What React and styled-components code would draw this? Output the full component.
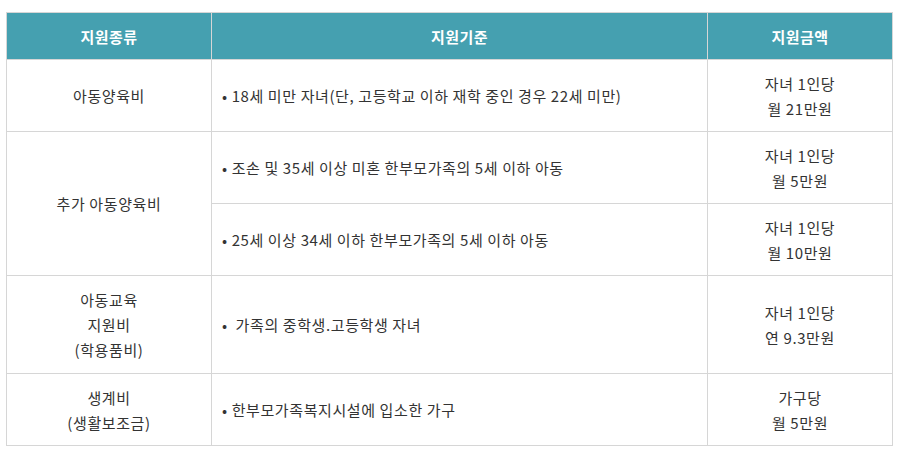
import React from 'react';
import styled, { createGlobalStyle } from 'styled-components';

const GlobalStyle = createGlobalStyle`
  body {
    margin: 0;
    background: #fff;
    font-family: "Noto Sans CJK KR", "Noto Sans", sans-serif;
  }
`;

const Wrap = styled.div`
  padding: 12px 12px 0 6px;
`;

const Table = styled.table`
  width: 886px;
  border-collapse: collapse;
  table-layout: fixed;
  font-size: 15px;
  letter-spacing: 0.6px;
  color: #333;
`;

const HeadCell = styled.th`
  height: 46px;
  padding: 0;
  background: #45a0b0;
  color: #fff;
  font-weight: 700;
  font-size: 15px;
  letter-spacing: 0.4px;
  text-align: center;
  border: 1px solid #d6d6d6;
`;

const Cell = styled.td`
  padding: 10px 10px;
  height: ${props => props.$h || 72}px;
  box-sizing: border-box;
  line-height: 25px;
  text-align: ${props => (props.$left ? 'left' : 'center')};
  border: 1px solid #d6d6d6;
  vertical-align: middle;
`;

const rows = [
  { kind: ['아동양육비'], rule: '• 18세 미만 자녀(단, 고등학교 이하 재학 중인 경우 22세 미만)', pay: ['자녀 1인당', '월 21만원'] },
  { kind: ['추가 아동양육비'], span: 2, rule: '• 조손 및 35세 이상 미혼 한부모가족의 5세 이하 아동', pay: ['자녀 1인당', '월 5만원'] },
  { rule: '• 25세 이상 34세 이하 한부모가족의 5세 이하 아동', pay: ['자녀 1인당', '월 10만원'] },
  { kind: ['아동교육', '지원비', '(학용품비)'], h: 98, rule: '•\u00a0 가족의 중학생.고등학생 자녀', pay: ['자녀 1인당', '연 9.3만원'] },
  { kind: ['생계비', '(생활보조금)'], rule: '• 한부모가족복지시설에 입소한 가구', pay: ['가구당', '월 5만원'] },
];

const Lines = ({ items }) => items.map((t, i) => <div key={i}>{t}</div>);

export default function App() {
  return (
    <>
      <GlobalStyle />
      <Wrap>
        <Table>
          <colgroup>
            <col style={{ width: 205 }} />
            <col style={{ width: 496 }} />
            <col style={{ width: 185 }} />
          </colgroup>
          <thead>
            <tr>
              <HeadCell>지원종류</HeadCell>
              <HeadCell>지원기준</HeadCell>
              <HeadCell>지원금액</HeadCell>
            </tr>
          </thead>
          <tbody>
            {rows.map((r, i) => (
              <tr key={i}>
                {r.kind && (
                  <Cell rowSpan={r.span || 1} $h={r.h}>
                    <Lines items={r.kind} />
                  </Cell>
                )}
                <Cell $left $h={r.h}>{r.rule}</Cell>
                <Cell $h={r.h}>
                  <Lines items={r.pay} />
                </Cell>
              </tr>
            ))}
          </tbody>
        </Table>
      </Wrap>
    </>
  );
}
